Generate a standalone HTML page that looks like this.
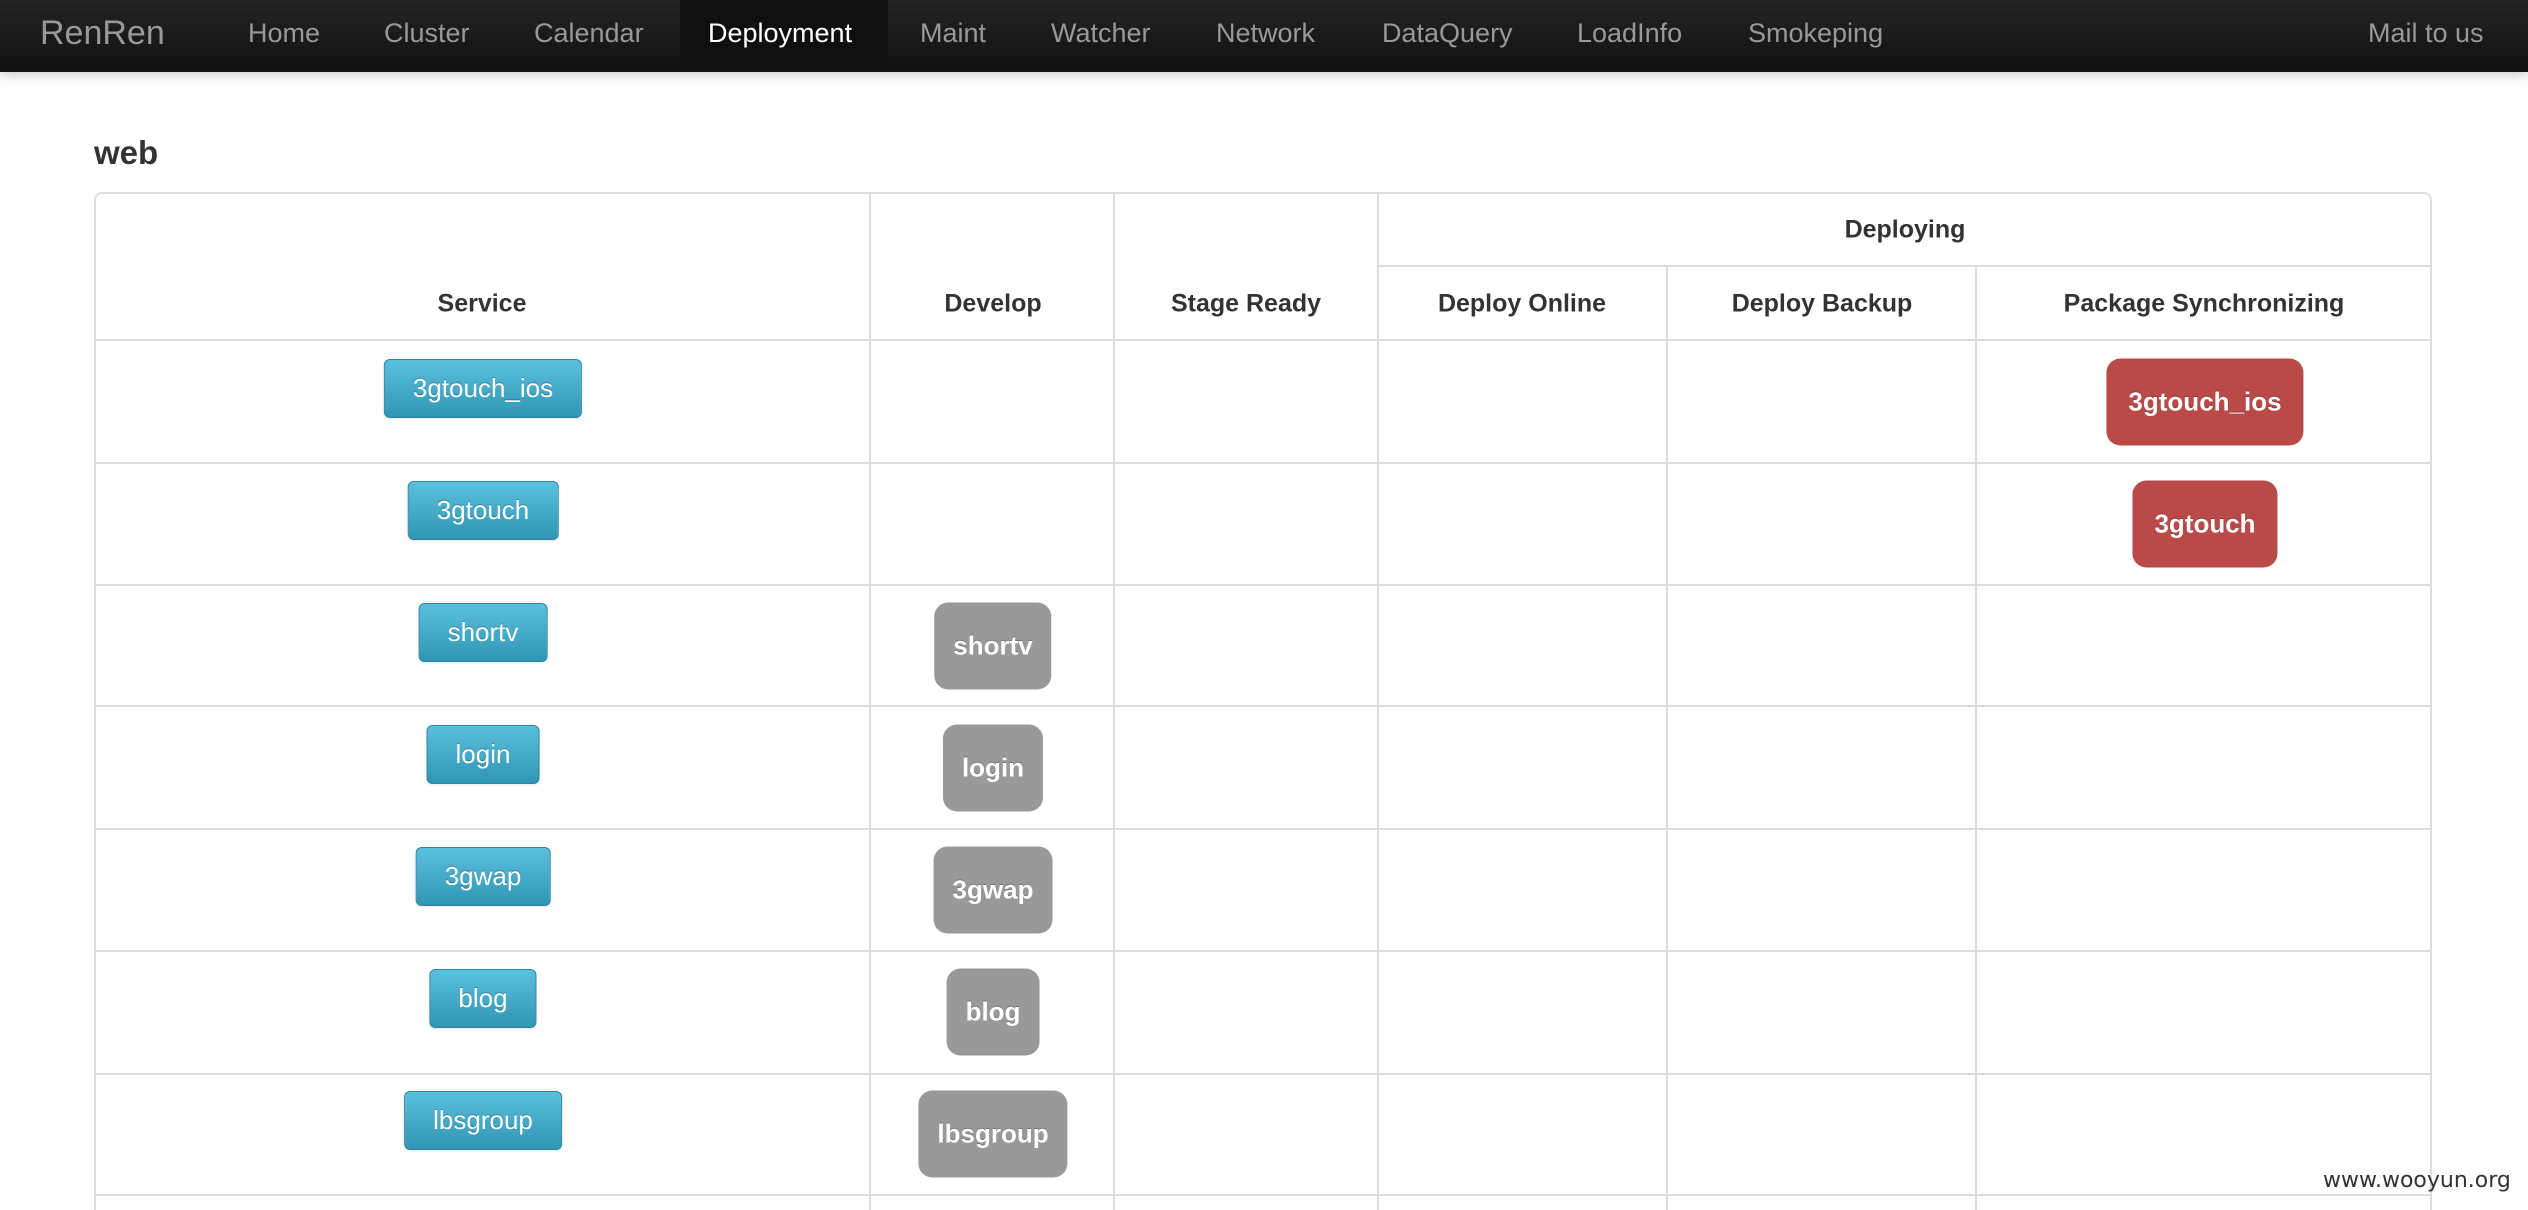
<!DOCTYPE html>
<html><head><meta charset="utf-8"><style>
*{margin:0;padding:0;box-sizing:border-box}
html,body{width:2528px;height:1210px;overflow:hidden}
body{background:#fff;font-family:"Liberation Sans",Arial,sans-serif;position:relative}
.nav{position:absolute;left:0;top:0;width:2528px;height:72px;background:linear-gradient(#242424,#111);box-shadow:0 2px 12px rgba(0,0,0,.25)}
.nav span{position:absolute;top:0;line-height:66px;font-size:27px;color:#999;white-space:nowrap}
.nav .brand{font-size:34px;font-weight:300;color:#999}
.nav .act{background:#0f0f0f;height:72px;}
h1{position:absolute;left:94px;top:134px;font-size:33px;font-weight:bold;color:#333}
.l{position:absolute;background:#ddd}
.th{position:absolute;font-size:25px;font-weight:bold;color:#333;transform:translate(-50%,-50%);white-space:nowrap}
.b{position:absolute;transform:translateX(-50%);height:59px;line-height:57px;padding:0 28px;font-size:26px;color:#fff;border-radius:6px;background:linear-gradient(#5bc0de,#2f96b4);border:1px solid #2a85a0;text-shadow:0 -1px 0 rgba(0,0,0,.25);box-shadow:0 1px 2px rgba(0,0,0,.1);white-space:nowrap}
.g{position:absolute;transform:translate(-50%,-50%);height:87px;line-height:87px;padding:0 19px;font-size:26px;font-weight:bold;color:#fff;border-radius:14px;background:#999;white-space:nowrap;text-shadow:0 -1px 0 rgba(0,0,0,.25)}
.r{background:#b94a48;padding:0 22px}
.wm{position:absolute;left:2323px;top:1168px;font-family:"DejaVu Sans",sans-serif;font-size:22px;color:#333}
</style></head><body>
<div class="nav">
<span class="brand" style="left:40px">RenRen</span>
<span class="act" style="left:680px;width:208px"></span>
<span style="left:248px">Home</span>
<span style="left:384px">Cluster</span>
<span style="left:534px">Calendar</span>
<span style="left:708px;color:#fff">Deployment</span>
<span style="left:920px">Maint</span>
<span style="left:1051px">Watcher</span>
<span style="left:1216px">Network</span>
<span style="left:1382px">DataQuery</span>
<span style="left:1577px">LoadInfo</span>
<span style="left:1748px">Smokeping</span>
<span style="left:2368px">Mail to us</span>
</div>
<h1>web</h1>
<div style="position:absolute;left:94px;top:192px;width:2338px;height:1018px;border:2px solid #ddd;border-bottom:none;border-radius:8px 8px 0 0"></div>
<div class="l" style="left:869px;top:193px;width:2px;height:1017px"></div>
<div class="l" style="left:1113px;top:193px;width:2px;height:1017px"></div>
<div class="l" style="left:1377px;top:193px;width:2px;height:1017px"></div>
<div class="l" style="left:1666px;top:266px;width:2px;height:944px"></div>
<div class="l" style="left:1975px;top:266px;width:2px;height:944px"></div>
<div class="l" style="left:1378px;top:265px;width:1053px;height:2px"></div>
<div class="l" style="left:95px;top:339px;width:2336px;height:2px"></div>
<div class="l" style="left:95px;top:462px;width:2336px;height:2px"></div>
<div class="l" style="left:95px;top:584px;width:2336px;height:2px"></div>
<div class="l" style="left:95px;top:705px;width:2336px;height:2px"></div>
<div class="l" style="left:95px;top:828px;width:2336px;height:2px"></div>
<div class="l" style="left:95px;top:950px;width:2336px;height:2px"></div>
<div class="l" style="left:95px;top:1073px;width:2336px;height:2px"></div>
<div class="l" style="left:95px;top:1194px;width:2336px;height:2px"></div>
<div class="th" style="left:482px;top:304px">Service</div>
<div class="th" style="left:993px;top:304px">Develop</div>
<div class="th" style="left:1246px;top:304px">Stage Ready</div>
<div class="th" style="left:1905px;top:230px">Deploying</div>
<div class="th" style="left:1522px;top:304px">Deploy Online</div>
<div class="th" style="left:1822px;top:304px">Deploy Backup</div>
<div class="th" style="left:2204px;top:304px">Package Synchronizing</div>

<div class="b" style="left:483px;top:359px">3gtouch_ios</div>
<div class="b" style="left:483px;top:481px">3gtouch</div>
<div class="b" style="left:483px;top:603px">shortv</div>
<div class="b" style="left:483px;top:725px">login</div>
<div class="b" style="left:483px;top:847px">3gwap</div>
<div class="b" style="left:483px;top:969px">blog</div>
<div class="b" style="left:483px;top:1091px">lbsgroup</div>

<div class="g r" style="left:2205px;top:402px">3gtouch_ios</div>
<div class="g r" style="left:2205px;top:524px">3gtouch</div>
<div class="g" style="left:993px;top:646px">shortv</div>
<div class="g" style="left:993px;top:768px">login</div>
<div class="g" style="left:993px;top:890px">3gwap</div>
<div class="g" style="left:993px;top:1012px">blog</div>
<div class="g" style="left:993px;top:1134px">lbsgroup</div>

<div class="wm">www.wooyun.org</div>
</body></html>
